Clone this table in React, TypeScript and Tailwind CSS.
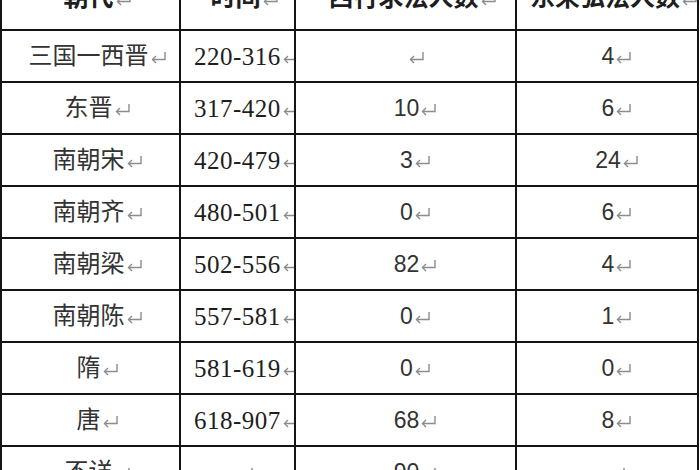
import React from 'react'

const rows = [
  { dynasty: '三国一西晋', period: '220-316', west: '', east: '4' },
  { dynasty: '东晋', period: '317-420', west: '10', east: '6' },
  { dynasty: '南朝宋', period: '420-479', west: '3', east: '24' },
  { dynasty: '南朝齐', period: '480-501', west: '0', east: '6' },
  { dynasty: '南朝梁', period: '502-556', west: '82', east: '4' },
  { dynasty: '南朝陈', period: '557-581', west: '0', east: '1' },
  { dynasty: '隋', period: '581-619', west: '0', east: '0' },
  { dynasty: '唐', period: '618-907', west: '68', east: '8' },
  { dynasty: '不详', period: '', west: '90', east: '' },
]

const cjk = { fontFamily: '"Liberation Serif", "Noto Sans CJK SC", serif' }
const sans = { fontFamily: '"Liberation Sans", "Noto Sans CJK SC", sans-serif' }

// the gray paragraph mark that Word leaves after each cell's text
function Ret() {
  return (
    <svg width="17" height="13" viewBox="0 0 17 13" className="ml-[1px] shrink-0 translate-y-[1px]">
      <path d="M15 1V8.5H2.5" fill="none" stroke="#8c8c8c" strokeWidth="1.4" />
      <path d="M6 5L2.5 8.5L6 12" fill="none" stroke="#8c8c8c" strokeWidth="1.4" />
    </svg>
  )
}

const cols = 'grid grid-cols-[181px_115px_221px_182px]'
const cell = 'flex items-center overflow-hidden border-r-2 border-b-2 border-[#141414]'

export default function App() {
  return (
    <div className="h-[470px] w-[700px] overflow-hidden bg-white text-[#1e1e1e]">
      <div className={`${cols} h-[31px]`} style={cjk}>
        {['朝代', '时间', '西行求法人数', '东来弘法人数'].map((h, i) => (
          <div
            key={h}
            className={`${cell} ${i === 0 ? 'border-l-2' : ''} items-start justify-center pl-[14px]`}
          >
            <div className="-mt-[15px] flex items-center whitespace-nowrap text-[25px] leading-[26px] font-bold">
              {h}
              <Ret />
            </div>
          </div>
        ))}
      </div>
      {rows.map((r) => (
        <div key={r.dynasty} className={`${cols} h-[52px]`}>
          <div className={`${cell} border-l-2 justify-center pl-[14px]`} style={cjk}>
            <span className="flex items-center whitespace-nowrap text-[24px] leading-none text-[#333]">
              {r.dynasty}
              <Ret />
            </span>
          </div>
          {r.period ? (
            <div className={`${cell} justify-start pl-[13px]`} style={cjk}>
              <span className="flex items-center whitespace-nowrap text-[25px] leading-none tracking-[0.5px]">
                {r.period}
                <Ret />
              </span>
            </div>
          ) : (
            <div className={`${cell} justify-center pl-[14px]`}>
              <Ret />
            </div>
          )}
          <div className={`${cell} justify-center pl-[20px]`} style={sans}>
            <span className="flex items-center whitespace-nowrap text-[23px] leading-none text-[#333]">
              {r.west}
              <Ret />
            </span>
          </div>
          <div className={`${cell} justify-center pl-[20px]`} style={sans}>
            <span className="flex items-center whitespace-nowrap text-[23px] leading-none text-[#333]">
              {r.east}
              <Ret />
            </span>
          </div>
        </div>
      ))}
    </div>
  )
}
